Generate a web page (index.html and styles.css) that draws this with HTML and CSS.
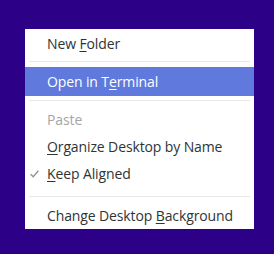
FILE: index.html
```html
<!DOCTYPE html>
<html>
<head>
<meta charset="utf-8">
<link rel="stylesheet" href="styles.css">
</head>
<body>
<div class="menu">
  <div class="item first">New <u>F</u>older</div>
  <div class="sep s1"></div>
  <div class="item hover">Open in T<u>e</u>rminal</div>
  <div class="sep s2"></div>
  <div class="item disabled">Paste</div>
  <div class="item"><u>O</u>rganize Desktop by Name</div>
  <div class="item checked"><svg class="check" width="9" height="8" viewBox="0 0 9 8"><path d="M0.7 4.2 L3.2 6.8 L8.4 0.8" fill="none" stroke="#8e9192" stroke-width="1.3"/></svg><u>K</u>eep Aligned</div>
  <div class="sep s3"></div>
  <div class="item">Change Desktop <u>B</u>ackground</div>
</div>
</body>
</html>
```
FILE: styles.css
```css
html, body {
  margin: 0;
  padding: 0;
  background: #2c0087;
  width: 274px;
  height: 254px;
  overflow: hidden;
}
.menu {
  margin: 29px 0 0 25px;
  width: 229px;
  background: #ffffff;
  padding-top: 1px;
  font-family: "Open Sans", sans-serif;
  font-size: 14px;
  letter-spacing: -0.12px;
  color: #2e3436;
}
.item {
  position: relative;
  height: 27px;
  line-height: 27px;
  padding-left: 22px;
  white-space: nowrap;
}
.item u {
  text-decoration-thickness: 1px;
  text-underline-offset: 2px;
}
.item.hover {
  height: 29px;
  line-height: 30px;
  background: #6079dc;
  color: #ffffff;
}
.item.disabled {
  color: #a4a6a6;
}
.check {
  position: absolute;
  left: 5px;
  top: 10px;
}
.sep {
  height: 1px;
  background: #e8e8e7;
  margin: 0 4px;
}
.s1 { margin-top: 4px; margin-bottom: 5px; }
.s2 { margin-top: 4px; margin-bottom: 5px; }
.s3 { margin-top: 9px; margin-bottom: 5px; }
```
